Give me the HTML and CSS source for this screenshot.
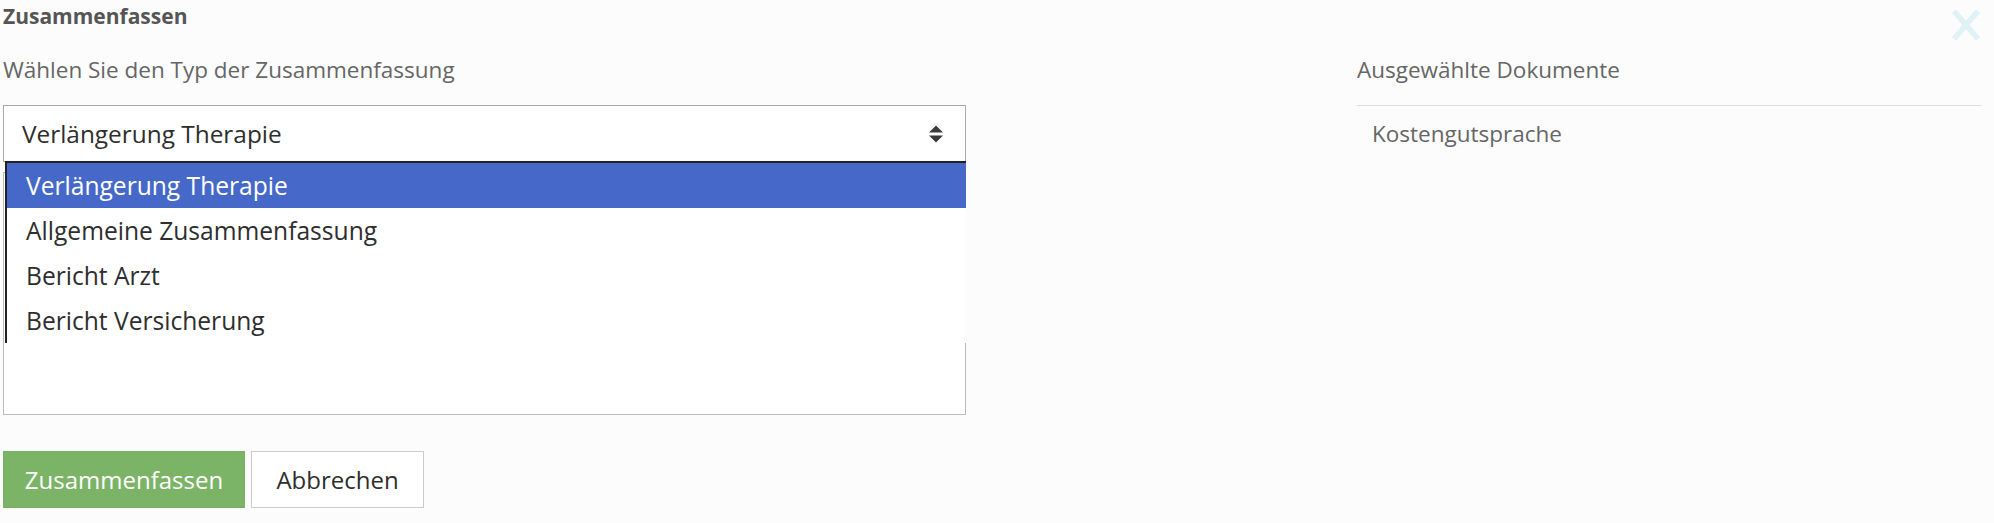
FILE: index.html
```html
<!DOCTYPE html>
<html lang="de">
<head>
<meta charset="utf-8">
<title>Zusammenfassen</title>
<link rel="stylesheet" href="styles.css">
</head>
<body>
<div class="modal">
  <button class="close" type="button" aria-label="Schliessen">
    <svg width="28" height="30" viewBox="0 0 28 30"><path d="M2 1 L26 29 M26 1 L2 29" stroke="#dff2f5" stroke-width="5.5" fill="none"/></svg>
  </button>
  <h1 class="title">Zusammenfassen</h1>
  <div class="columns">
    <div class="col-left">
      <div class="label">Wählen Sie den Typ der Zusammenfassung</div>
      <div class="select-wrap">
        <div class="select">
          <span class="select-value">Verlängerung Therapie</span>
          <svg class="arrows" width="14" height="18" viewBox="0 0 14 18"><path d="M0 7.5 L7 0.5 L14 7.5 Z M0 10.5 L14 10.5 L7 17.5 Z" fill="#3a3a3a"/></svg>
        </div>
        <ul class="dropdown">
          <li class="option selected">Verlängerung Therapie</li>
          <li class="option">Allgemeine Zusammenfassung</li>
          <li class="option">Bericht Arzt</li>
          <li class="option">Bericht Versicherung</li>
        </ul>
      </div>
      <div class="textarea"></div>
    </div>
    <div class="col-right">
      <div class="label">Ausgewählte Dokumente</div>
      <div class="doc-list">
        <div class="doc">Kostengutsprache</div>
      </div>
    </div>
  </div>
  <div class="actions">
    <button class="btn btn-primary" type="button">Zusammenfassen</button>
    <button class="btn btn-default" type="button">Abbrechen</button>
  </div>
</div>
</body>
</html>
```

FILE: styles.css
```css
* { box-sizing: border-box; }

html, body {
  margin: 0;
  padding: 0;
  background: #fcfcfc;
}

body {
  font-family: "Open Sans", "Liberation Sans", sans-serif;
  color: #333;
}

.modal {
  position: relative;
  padding: 0 13px 0 3px;
}

.close {
  position: absolute;
  top: 10px;
  right: 14px;
  padding: 0;
  margin: 0;
  border: 0;
  background: none;
  line-height: 0;
}

.title {
  margin: 0;
  font-size: 21px;
  font-weight: 700;
  line-height: 30px;
  color: #555;
  padding-top: 1px;
}

.columns {
  display: flex;
  justify-content: space-between;
  margin-top: 24px;
}

.col-left {
  width: 963px;
}

.col-right {
  width: 624px;
}

.label {
  font-size: 22.5px;
  line-height: 30px;
  color: #666;
}

.select-wrap {
  position: relative;
  margin-top: 20px;
}

.select {
  height: 57px;
  border: 1px solid #a9a9a9;
  background: #fff;
  display: flex;
  align-items: center;
  justify-content: space-between;
  padding: 0 22px 0 18px;
}

.select-value {
  font-size: 24.4px;
  line-height: 32px;
  color: #2e2e2e;
}

.arrows {
  display: block;
}

.dropdown {
  position: absolute;
  top: 56px;
  left: 2px;
  right: 0;
  margin: 0;
  padding: 0;
  list-style: none;
  background: #fff;
  border-top: 2px solid #222;
  border-left: 2px solid #222;
  z-index: 2;
}

.option {
  height: 45px;
  line-height: 45px;
  padding-left: 19px;
  font-size: 24.6px;
  color: #2e2e2e;
}

.option.selected {
  background: #4669c9;
  color: #fff;
}

.textarea {
  margin-top: 10px;
  height: 243px;
  border: 1px solid #bcbcbc;
  background: #fff;
}

.doc-list {
  margin-top: 20px;
  border-top: 1px solid #ddd;
  padding: 13px 0 0 15px;
}

.doc {
  font-size: 22.5px;
  line-height: 30px;
  color: #666;
}

.actions {
  display: flex;
  gap: 6px;
  margin-top: 36px;
}

.btn {
  height: 57px;
  font-family: inherit;
  font-size: 24px;
  line-height: 32px;
  margin: 0;
  border-radius: 0;
  cursor: pointer;
}

.btn-primary {
  width: 242px;
  border: 1px solid #78b265;
  background: #7bb467;
  color: #fff;
}

.btn-default {
  width: 173px;
  border: 1px solid #ccc;
  background: #fff;
  color: #2e2e2e;
}
```
